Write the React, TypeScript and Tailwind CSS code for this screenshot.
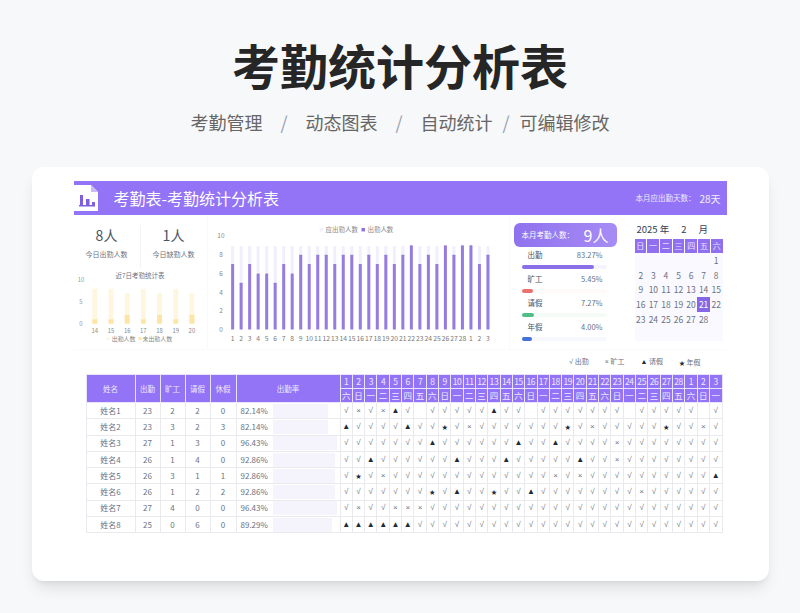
import React from 'react';

const PRESENT = [7, 5, 7, 6, 6, 5, 7, 6, 8, 7, 8, 8, 7, 8, 8, 7, 8, 7, 8, 7, 8, 9, 7, 8, 7, 9, 8, 9, 9, 7, 8];
const DAY_LABELS = [...Array.from({ length: 28 }, (_, i) => i + 1), 1, 2, 3];
const WEEK = ['六', '日', '一', '二', '三', '四', '五'];

const WEEK_CHART = [
  { day: 14, total: 8, absent: 1 },
  { day: 15, total: 8, absent: 1 },
  { day: 16, total: 7, absent: 2 },
  { day: 17, total: 8, absent: 1 },
  { day: 18, total: 7, absent: 2 },
  { day: 19, total: 8, absent: 1 },
  { day: 20, total: 7, absent: 2 },
];

const STATS = [
  { label: '出勤', value: '83.27%', width: 85, fill: 'bg-[#8b6fe8]', track: 'bg-[#f6f4fe]' },
  { label: '旷工', value: '5.45%', width: 13, fill: 'bg-[#ec7070]', track: 'bg-[#fefafa]' },
  { label: '请假', value: '7.27%', width: 15, fill: 'bg-[#4fbf87]', track: 'bg-[#f5fcf8]' },
  { label: '年假', value: '4.00%', width: 12, fill: 'bg-[#4472d6]', track: 'bg-[#f6f8fe]' },
];

// v = √, x = ×, t = ▲, s = ★, . = blank
const ROWS = [
  { name: '姓名1', a: 23, b: 2, c: 2, d: 0, rate: 82.14, marks: 'vxvxtv.vvvvvtvv.vvvvvvv.vvvvv.v' },
  { name: '姓名2', a: 23, b: 3, c: 2, d: 3, rate: 82.14, marks: 'tvvvvtvvsvxvvvvvvvsvxvvvvvsvvxv' },
  { name: '姓名3', a: 27, b: 1, c: 3, d: 0, rate: 96.43, marks: 'vvvvvvvtvvvvvvtvvtvvvvxvvvvvvvv' },
  { name: '姓名4', a: 26, b: 1, c: 4, d: 0, rate: 92.86, marks: 'vvtvvvvvvtvvvtvvvvvtvvxvvvvvvvv' },
  { name: '姓名5', a: 26, b: 3, c: 1, d: 1, rate: 92.86, marks: 'vsvxvvvvvvvvvvvvvxvxvvvvvvvvvvt' },
  { name: '姓名6', a: 26, b: 1, c: 2, d: 2, rate: 92.86, marks: 'vvvvvvvsvtvvsvvtvvvvvvvvxvvvvvv' },
  { name: '姓名7', a: 27, b: 4, c: 0, d: 0, rate: 96.43, marks: 'vxvvxxxvvvvvvvvvvvvvvvvvvvvvvvv' },
  { name: '姓名8', a: 25, b: 0, c: 6, d: 0, rate: 89.29, marks: 'ttttttvvvvvvvvvvvvvvvvvvvvvvvvv' },
];

const GLYPH: Record<string, string> = { v: '√', x: '×', t: '▲', s: '★', '.': '' };

const CALENDAR = [
  ['', '', '', '', '', '', 1],
  [2, 3, 4, 5, 6, 7, 8],
  [9, 10, 11, 12, 13, 14, 15],
  [16, 17, 18, 19, 20, 21, 22],
  [23, 24, 25, 26, 27, 28, ''],
  ['', '', '', '', '', '', ''],
];

function DocIcon() {
  return (
    <svg viewBox="0 0 24 26" className="h-6.5 w-6 shrink-0">
      <path d="M0 0h17l7 7v19H0z" fill="#fff" />
      <path d="M17 0l7 7h-7z" fill="#c9baf9" />
      <path d="M6 10h3v10H6zM12 14h3.5v6H12zM18 17h3v3h-3zM5 20h16v1.5H5z" fill="#7d5fe0" />
    </svg>
  );
}

function WeekChart() {
  return (
    <svg viewBox="0 0 134 72" className="w-full overflow-visible">
      {[10, 5, 0].map((n, i) => (
        <text key={n} x="7" y={4 + i * 22} textAnchor="middle" fontSize="6" fill="#999">
          {n}
        </text>
      ))}
      {WEEK_CHART.map((d, i) => {
        const x = 18.5 + i * 16.3;
        const h = d.total * 4.4;
        const ah = d.absent * 4.4;
        return (
          <g key={d.day}>
            <rect x={x} y={46 - h} width="5" height={h} fill="#fff6e0" />
            <rect x={x} y={46 - ah} width="5" height={ah} fill="#fde5a6" />
            <text x={x + 2.5} y="55" textAnchor="middle" fontSize="6" fill="#888">
              {d.day}
            </text>
          </g>
        );
      })}
      <rect x="33" y="59.5" width="3" height="3" fill="#fff6e0" />
      <text x="38" y="63" fontSize="6" fill="#888">出勤人数</text>
      <rect x="65" y="59.5" width="3" height="3" fill="#fde5a6" />
      <text x="69" y="63" fontSize="6" fill="#888">未出勤人数</text>
    </svg>
  );
}

function MonthChart() {
  return (
    <svg viewBox="0 -2 302 135" className="w-full">
      <rect x="112" y="11" width="3.5" height="3.5" fill="#f1eefd" />
      <text x="118" y="15.5" fontSize="6.5" fill="#888">应出勤人数</text>
      <rect x="154" y="11" width="3.5" height="3.5" fill="#8f72e4" />
      <text x="160" y="15.5" fontSize="6.5" fill="#888">出勤人数</text>
      {[10, 8, 6, 4, 2, 0].map((n, i) => (
        <text key={n} x="13" y={21.5 + i * 18.8} textAnchor="middle" fontSize="6.5" fill="#888">
          {n}
        </text>
      ))}
      {PRESENT.map((v, i) => {
        const cx = 24.7 + i * 8.54;
        return (
          <g key={i}>
            <rect x={cx - 1.5} y={29} width="3" height={84} rx="0.5" fill="#f1eefd" />
            <rect x={cx - 1.5} y={113 - v * 9.4} width="3" height={v * 9.4} rx="0.5" fill="#977ce0" />
            <text x={cx} y="124.5" textAnchor="middle" fontSize="6.8" fill="#777">
              {DAY_LABELS[i]}
            </text>
          </g>
        );
      })}
    </svg>
  );
}

function StatsPanel() {
  return (
    <div className="w-[103px] shrink-0 pt-2">
      <div className="flex h-6 items-center justify-between rounded-md bg-gradient-to-r from-[#8f72ee] to-[#a78bf5] px-2 text-white">
        <span className="text-[7.5px]">本月考勤人数：</span>
        <span className="text-base leading-none">9人</span>
      </div>
      <div className="mt-0.5 flex flex-col gap-1 pl-2 pr-2.5">
        {STATS.map((s) => (
          <div key={s.label}>
            <div className="flex justify-between pl-1.5 pr-1 text-[7.5px] leading-3 text-gray-500">
              <span className="text-gray-600">{s.label}</span>
              <span>{s.value}</span>
            </div>
            <div className={`mt-1 h-1 rounded-full ${s.track}`}>
              <div className={`h-1 rounded-full ${s.fill}`} style={{ width: `${s.width}%` }} />
            </div>
          </div>
        ))}
      </div>
    </div>
  );
}

function Calendar() {
  return (
    <div className="ml-4.5 flex-1 pr-1 pt-2">
      <div className="flex h-3 items-center pl-0.5 text-[9.5px] text-gray-700">
        <span>2025 年</span>
        <span className="ml-3">2</span>
        <span className="ml-3">月</span>
      </div>
      <div className="mt-1 grid grid-cols-7 gap-px">
        {['日', '一', '二', '三', '四', '五', '六'].map((w) => (
          <div key={w} className="flex h-3.5 items-center justify-center bg-[#9070f0] text-[8px] text-white/80">
            {w}
          </div>
        ))}
      </div>
      <div className="grid h-22 grid-cols-7 grid-rows-6 bg-[#faf9ff]">
        {CALENDAR.flat().map((d, i) => (
          <div
            key={i}
            className={`flex items-center justify-center text-[8.5px] ${d === 21 ? 'bg-[#8566e4] text-white' : 'text-gray-500'}`}
          >
            {d}
          </div>
        ))}
      </div>
    </div>
  );
}

function AttendanceTable() {
  const th = 'border border-[#e8e4fb] bg-[#9373f6] font-normal text-white/85';
  const td = 'h-[16.3px] border border-[#e9e9ee] p-0 text-center leading-none text-gray-500';
  return (
    <table className="ml-3 w-[637px] table-fixed border-collapse">
      <colgroup>
        <col className="w-[49px]" />
        <col className="w-[25px]" />
        <col className="w-[25px]" />
        <col className="w-[25px]" />
        <col className="w-[26px]" />
        <col className="w-[104px]" />
        {DAY_LABELS.map((_, i) => (
          <col key={i} />
        ))}
      </colgroup>
      <thead>
        <tr className="h-3.5 text-[7.5px]">
          {['姓名', '出勤', '旷工', '请假', '休假', '出勤率'].map((h) => (
            <th key={h} rowSpan={2} className={th}>
              {h}
            </th>
          ))}
          {DAY_LABELS.map((d, i) => (
            <th key={i} className={`${th} p-0 text-[8.5px] tracking-tighter`}>
              {d}
            </th>
          ))}
        </tr>
        <tr className="h-3.5 text-[8.5px]">
          {DAY_LABELS.map((_, i) => (
            <th key={i} className={`${th} p-0`}>
              {WEEK[i % 7]}
            </th>
          ))}
        </tr>
      </thead>
      <tbody className="text-[8px]">
        {ROWS.map((r) => (
          <tr key={r.name}>
            <td className={td}>{r.name}</td>
            <td className={td}>{r.a}</td>
            <td className={td}>{r.b}</td>
            <td className={td}>{r.c}</td>
            <td className={td}>{r.d}</td>
            <td className={td}>
              <div className="flex h-full items-center pl-1">
                <span className="w-8 shrink-0 text-left">{r.rate.toFixed(2)}%</span>
                <div className="h-3.5 flex-1">
                  <div className="h-full bg-[#f5f3fc]" style={{ width: `${r.rate}%` }} />
                </div>
              </div>
            </td>
            {r.marks.split('').map((m, i) => (
              <td
                key={i}
                className={`${td} font-['Liberation_Sans','Noto_Sans_CJK_SC',sans-serif] ${m === 't' ? 'text-gray-800' : ''} ${m === 's' ? 'text-[6px] text-gray-800' : ''}`}
              >
                {GLYPH[m]}
              </td>
            ))}
          </tr>
        ))}
      </tbody>
    </table>
  );
}

export default function App() {
  return (
    <div className="flex h-[613px] w-[800px] flex-col items-center overflow-hidden bg-[#f7f8fa] font-['Noto_Sans_CJK_SC',sans-serif]">
      <h1 className="mt-8 text-5xl leading-16 font-bold text-[#262626]">考勤统计分析表</h1>
      <div className="mt-3.5 flex items-center text-lg leading-6 text-[#666]">
        <span>考勤管理</span>
        <span className="mx-4.5 text-gray-400">/</span>
        <span>动态图表</span>
        <span className="mx-4.5 text-gray-400">/</span>
        <span>自动统计</span>
        <span className="mx-2.5 text-gray-400">/</span>
        <span>可编辑修改</span>
      </div>

      <div className="mt-[33px] h-[414px] w-[737px] rounded-xl bg-white px-[42px] pt-3.5 shadow-lg">
        <div className="flex h-[34px] items-center bg-[#9373f6] text-white">
          <DocIcon />
          <span className="ml-4 text-base">考勤表-考勤统计分析表</span>
          <span className="ml-auto text-[7.5px] text-white/85">本月应出勤天数：</span>
          <span className="ml-1 mr-1.5 text-[10px] text-white/90">28天</span>
        </div>

        <div className="flex h-[135px] border-b border-gray-50">
          <div className="w-[134px] shrink-0 border-r border-gray-50">
            <div className="flex pt-2.5 text-center">
              <div className="flex-1 border-r border-gray-100">
                <div className="text-sm leading-5 text-gray-600">8人</div>
                <div className="mt-1 pb-2 text-[7px] text-gray-500">今日出勤人数</div>
              </div>
              <div className="flex-1">
                <div className="text-sm leading-5 text-gray-600">1人</div>
                <div className="mt-1 text-[7px] text-gray-500">今日缺勤人数</div>
              </div>
            </div>
            <div className="mt-1 text-center text-[6.5px] leading-none text-gray-500">近7日考勤统计表</div>
            <WeekChart />
          </div>
          <div className="w-[302px] shrink-0 border-r border-gray-50">
            <MonthChart />
          </div>
          <div className="ml-1 flex flex-1">
            <StatsPanel />
            <Calendar />
          </div>
        </div>

        <div className="flex h-6 items-center justify-end gap-4 pr-6.5 text-[7px] text-gray-500">
          <span><span className="font-['Liberation_Sans']">√</span> 出勤</span>
          <span><span className="font-['Liberation_Sans']">×</span> 旷工</span>
          <span><span className="font-['Liberation_Sans'] text-gray-800">▲</span> 请假</span>
          <span><span className="text-[6px] text-gray-800">★</span> 年假</span>
        </div>
        <AttendanceTable />
      </div>
    </div>
  );
}
